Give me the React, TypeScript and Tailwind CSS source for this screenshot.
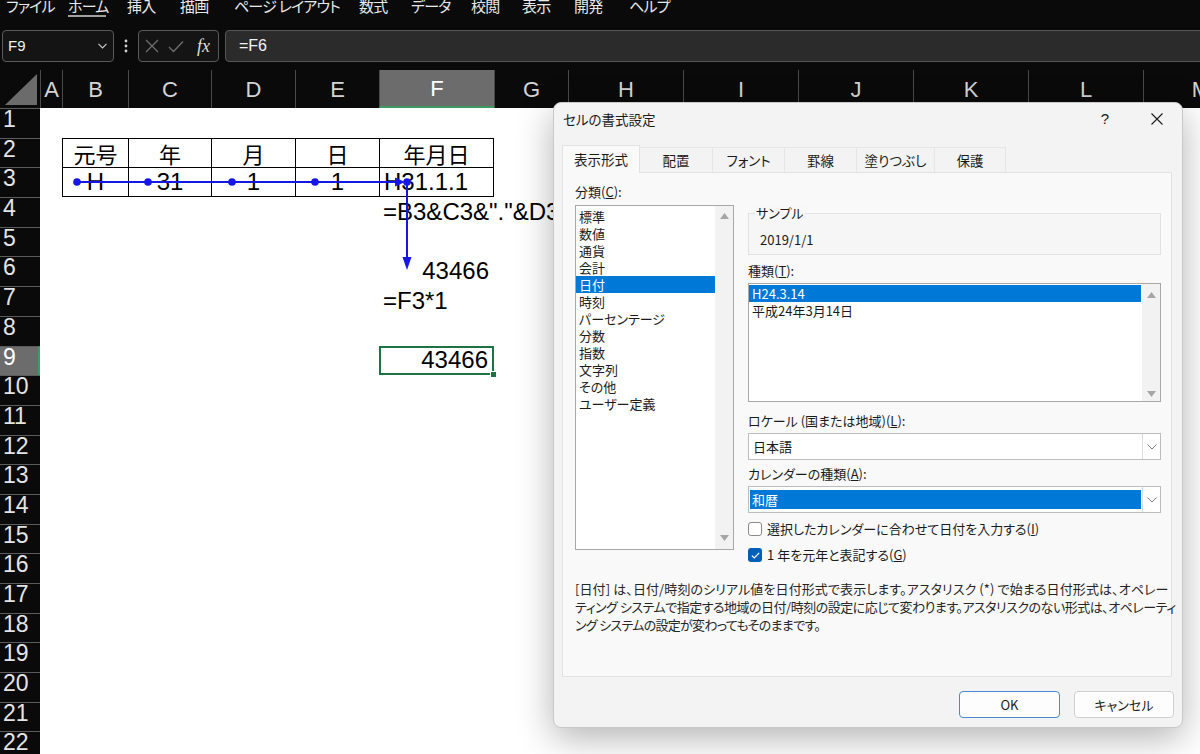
import React from "react";

const CJK = "font-['Noto_Sans_CJK_JP',sans-serif]";
const LAT = "font-['Liberation_Sans',sans-serif]";

const MENU: [string, string][] = [
  ["ファイル", "w-[62px]"],
  ["ホーム", "w-[59px]"],
  ["挿入", "w-[53px]"],
  ["描画", "w-[54px]"],
  ["ページ レイアウト", "w-[125px]"],
  ["数式", "w-[52px]"],
  ["データ", "w-[60px]"],
  ["校閲", "w-[51px]"],
  ["表示", "w-[52px]"],
  ["開発", "w-[55px]"],
  ["ヘルプ", "w-[60px]"],
];

const COLS: [string, string][] = [
  ["A", "w-[22px]"],
  ["B", "w-[66px]"],
  ["C", "w-[83px]"],
  ["D", "w-[84px]"],
  ["E", "w-[84px]"],
  ["F", "w-[115px]"],
  ["G", "w-[74px]"],
  ["H", "w-[115px]"],
  ["I", "w-[115px]"],
  ["J", "w-[115px]"],
  ["K", "w-[115px]"],
  ["L", "w-[115px]"],
  ["M", "w-[115px]"],
];

const ROWS = Array.from({ length: 22 }, (_, i) => i + 1);

const TEXT: Record<string, string> = {
  B2: "元号",
  C2: "年",
  D2: "月",
  E2: "日",
  F2: "年月日",
  B3: "H",
  C3: "31",
  D3: "1",
  E3: "1",
  F3: "H31.1.1",
  F4: '=B3&C3&"."&D3',
  F6: "43466",
  F7: "=F3*1",
  F9: "43466",
};

const CATS = [
  "標準",
  "数値",
  "通貨",
  "会計",
  "日付",
  "時刻",
  "パーセンテージ",
  "分数",
  "指数",
  "文字列",
  "その他",
  "ユーザー定義",
];

const TABS: [string, string][] = [
  ["表示形式", "w-[78px]"],
  ["配置", "w-[73px]"],
  ["フォント", "w-[72px]"],
  ["罫線", "w-[72px]"],
  ["塗りつぶし", "w-[78px]"],
  ["保護", "w-[71px]"],
];

function MenuBar() {
  return (
    <div className={`flex h-[30px] pl-[6px] text-[15px] leading-[15px] tracking-[-0.8px] text-[#e8e8e8] ${CJK} [font-feature-settings:'palt']`}>
      {MENU.map(([t, w]) => (
        <div key={t} className={`${w} shrink-0 flex flex-col items-start -mt-[2px]`}>
          <span className="whitespace-pre">{t}</span>
          {t === "ホーム" && <div className="mt-[2px] h-[2px] w-[38px] bg-[#a0a0a0]" />}
        </div>
      ))}
    </div>
  );
}

function FormulaBar() {
  return (
    <div className="flex h-[32px]">
      <div className="ml-[2px] w-[112px] shrink-0 rounded-[4px] border border-[#5a5a5a] bg-[#141414] flex items-center pl-[5px] pr-[6px] text-[15px] text-[#f0f0f0]">
        <span className={LAT}>F9</span>
        <svg className="ml-auto" width="9" height="6" viewBox="0 0 9 6">
          <path d="M0.5 0.8 L4.5 4.8 L8.5 0.8" stroke="#c8c8c8" strokeWidth="1.2" fill="none" />
        </svg>
      </div>
      <div className="w-[24px] shrink-0 flex items-center justify-center">
        <svg width="4" height="14" viewBox="0 0 4 14">
          <circle cx="2" cy="2" r="1.4" fill="#d0d0d0" />
          <circle cx="2" cy="7" r="1.4" fill="#d0d0d0" />
          <circle cx="2" cy="12" r="1.4" fill="#d0d0d0" />
        </svg>
      </div>
      <div className="w-[81px] shrink-0 rounded-[4px] border border-[#5a5a5a] bg-[#141414] flex items-center pl-[6px]">
        <svg width="14" height="14" viewBox="0 0 14 14">
          <path d="M1 1 L13 13 M13 1 L1 13" stroke="#6e6e6e" strokeWidth="1.3" />
        </svg>
        <svg className="ml-[9px]" width="16" height="13" viewBox="0 0 16 13">
          <path d="M1 7 L5.5 11.5 L15 1.5" stroke="#6e6e6e" strokeWidth="1.3" fill="none" />
        </svg>
        <span className="ml-[13px] text-[18px] leading-[18px] italic text-[#dedede] font-['Liberation_Serif',serif]">fx</span>
      </div>
      <div className={`ml-[6px] w-[990px] shrink-0 rounded-[4px] border border-[#555555] bg-[#2b2b2b] flex items-center pl-[13px] text-[16px] text-[#f2f2f2] ${LAT}`}>
        =F6
      </div>
    </div>
  );
}

function Cell({ col, w, r }: { col: string; w: string; r: number }) {
  const key = `${col}${r}`;
  const text = TEXT[key];
  const inTable = (r === 2 || r === 3) && "BCDEF".includes(col);
  const sel = key === "F9";
  let cls = `${w} shrink-0 relative flex items-center whitespace-nowrap text-black`;
  if (inTable) {
    cls += " border-l border-t border-black";
    if (col === "F") cls += " border-r";
    if (r === 3) cls += " border-b";
  }
  if (sel) cls += " border-2 border-[#1f7244]";
  if (text) {
    if (r === 2) cls += ` justify-center text-[22px] ${CJK}`;
    else cls += ` text-[24px] ${LAT}`;
    if (r === 3 && col !== "F") cls += " justify-center";
    if (key === "F3" || key === "F4" || key === "F7") cls += " pl-[4px]";
    if (key === "F6") cls += " justify-end pr-[5px]";
    if (key === "F9") cls += " justify-end pr-[4px]";
  }
  return (
    <div className={cls}>
      {text}
      {sel && <div className="absolute -right-[5px] -bottom-[5px] w-[7px] h-[7px] bg-[#1f7244] border border-white" />}
    </div>
  );
}

function Row({ r }: { r: number }) {
  return (
    <div className="flex h-[29.7px]">
      <div
        className={`w-[40px] shrink-0 border-t border-[#5c5c5c] pl-[3px] text-[23px] leading-[20px] ${LAT} ${
          r === 9 ? "bg-[#6c6c6c] text-white border-r-2 border-r-[#3d9a62]" : "bg-[#0a0a0a] text-[#e4e4e4]"
        }`}
      >
        {r}
      </div>
      {COLS.map(([c, w]) => (
        <Cell key={c} col={c} w={w} r={r} />
      ))}
    </div>
  );
}

function Sheet() {
  return (
    <div className="mt-[8px] bg-white">
      <div className="flex h-[38px] bg-[#0a0a0a]">
        <div className="w-[40px] shrink-0">
          <svg width="40" height="38" className="block">
            <polygon points="37,4 37,35 5,35" fill="#6b6b6b" />
          </svg>
        </div>
        {COLS.map(([name, w]) => (
          <div
            key={name}
            className={`${w} shrink-0 flex items-center justify-center border-l border-[#4a4a4a] text-[22px] ${LAT} ${
              name === "F" ? "bg-[#6c6c6c] text-white border-b-2 border-b-[#3d9a62]" : "text-[#d4d4d4]"
            }`}
          >
            {name}
          </div>
        ))}
      </div>
      {ROWS.map((r) => (
        <Row key={r} r={r} />
      ))}
    </div>
  );
}

function Tracer() {
  return (
    <svg className="absolute left-0 top-0 pointer-events-none" width="1200" height="754">
      <g fill="#1616e8">
        <line x1="77" y1="182" x2="397" y2="182" stroke="#1616e8" strokeWidth="2" />
        <polygon points="395,177.5 405,182 395,186.5" />
        <line x1="407" y1="182" x2="407" y2="259" stroke="#1616e8" strokeWidth="2" />
        <polygon points="402.5,257 407,270 411.5,257" />
        <circle cx="77" cy="182" r="3.8" />
        <circle cx="148" cy="182" r="3.8" />
        <circle cx="232" cy="182" r="3.8" />
        <circle cx="315" cy="182" r="3.8" />
        <circle cx="407" cy="182" r="3.8" />
      </g>
    </svg>
  );
}

function Up() {
  return (
    <svg width="9" height="6" viewBox="0 0 9 6">
      <polygon points="0,6 4.5,0 9,6" fill="#a6a6a6" />
    </svg>
  );
}
function Down() {
  return (
    <svg width="9" height="6" viewBox="0 0 9 6">
      <polygon points="0,0 4.5,6 9,0" fill="#a6a6a6" />
    </svg>
  );
}
function Chevron() {
  return (
    <svg width="10" height="6" viewBox="0 0 10 6">
      <path d="M0.5 0.5 L5 5 L9.5 0.5" stroke="#7c7c7c" strokeWidth="1" fill="none" />
    </svg>
  );
}

function Combo({ selected }: { selected?: boolean }) {
  return (
    <div className="mt-[4px] h-[27px] border border-[#bdbdbd] bg-white flex">
      <div className="flex-1 px-[1px] flex items-center">
        {selected ? (
          <div className="w-full h-[19px] bg-[#0078d7] text-white pl-[2px] leading-[19px]">和暦</div>
        ) : (
          <span className="pl-[3px]">日本語</span>
        )}
      </div>
      <div className="w-[18px] border-l border-[#dcdcdc] flex items-center justify-center">
        <Chevron />
      </div>
    </div>
  );
}

function Dialog() {
  return (
    <div
      className={`absolute left-[553px] top-[102px] w-[630px] h-[626px] rounded-[8px] border border-[#c9c9c9] bg-[#f3f3f3] shadow-[0_10px_36px_rgba(0,0,0,0.30)] flex flex-col text-[#1b1b1b] text-[13px] ${CJK} [font-feature-settings:'palt']`}
    >
      <div className="h-[32px] shrink-0 flex items-center pl-[9px] pr-[13px]">
        <span className="text-[13.5px]">セルの書式設定</span>
        <div className="ml-auto flex items-center gap-[28px]">
          <span className={`w-[24px] text-center text-[15px] ${LAT}`}>?</span>
          <div className="w-[24px] flex justify-center">
            <svg width="12" height="12" viewBox="0 0 12 12">
              <path d="M0.5 0.5 L11.5 11.5 M11.5 0.5 L0.5 11.5" stroke="#1b1b1b" strokeWidth="1.1" />
            </svg>
          </div>
        </div>
      </div>

      <div className="mt-[10px] ml-[8px] h-[27px] shrink-0 flex items-end relative z-10">
        {TABS.map(([t, w], i) =>
          i === 0 ? (
            <div
              key={t}
              className={`${w} h-[28px] -mb-[1px] flex items-center justify-center bg-[#f9f9f9] border border-b-0 border-[#e2e2e2] text-[13.5px]`}
            >
              {t}
            </div>
          ) : (
            <div
              key={t}
              className={`${w} h-[25px] flex items-center justify-center bg-[#f3f3f3] border-t border-r border-[#e6e6e6] text-[13.5px]`}
            >
              {t}
            </div>
          )
        )}
      </div>

      <div className="ml-[8px] w-[610px] h-[505px] shrink-0 border border-[#e2e2e2] bg-[#f9f9f9] flex flex-col">
        <div className="flex pl-[12px]">
          <div className="w-[159px] shrink-0 pt-[11px]">
            <div className="h-[16px] leading-[16px]">
              分類(<u>C</u>):
            </div>
            <div className="mt-[5px] h-[345px] border border-[#a8a8a8] bg-white flex">
              <div className="flex-1 pt-[2px]">
                {CATS.map((c) => (
                  <div
                    key={c}
                    className={`h-[17px] leading-[17px] pl-[3px] whitespace-nowrap ${c === "日付" ? "bg-[#0078d7] text-white" : ""}`}
                  >
                    {c}
                  </div>
                ))}
              </div>
              <div className="w-[18px] bg-[#f2f2f2] flex flex-col items-center justify-between pt-[7px] pb-[8px]">
                <Up />
                <Down />
              </div>
            </div>
          </div>

          <div className="ml-[14px] w-[413px] shrink-0 pt-[40px]">
            <div className="relative h-[42px] border border-[#e2e2e2] bg-[#f6f6f6] pl-[11px] pt-[18px]">
              <span className="absolute -top-[9px] left-[6px] px-[1px] bg-[#f8f8f8] leading-[16px]">サンプル</span>
              <div className="leading-[16px]">2019/1/1</div>
            </div>

            <div className="mt-[8px] h-[16px] leading-[16px]">
              種類(<u>T</u>):
            </div>
            <div className="mt-[4px] h-[119px] border border-[#a8a8a8] bg-white flex">
              <div className="flex-1 pt-[1px] pr-[1px]">
                <div className="h-[17px] leading-[17px] pl-[3px] bg-[#0078d7] text-white">H24.3.14</div>
                <div className="h-[17px] leading-[17px] pl-[3px]">平成24年3月14日</div>
              </div>
              <div className="w-[18px] bg-[#f2f2f2] flex flex-col items-center justify-between pt-[8px] pb-[4px]">
                <Up />
                <Down />
              </div>
            </div>

            <div className="mt-[11px] h-[16px] leading-[16px]">
              ロケール (国または地域)(<u>L</u>):
            </div>
            <Combo />

            <div className="mt-[6px] h-[16px] leading-[16px]">
              カレンダーの種類(<u>A</u>):
            </div>
            <Combo selected />

            <div className="mt-[8px] h-[16px] flex items-center">
              <div className="w-[14px] h-[14px] rounded-[3px] border border-[#8a8a8a] bg-white" />
              <span className="ml-[5px] leading-[16px]">
                選択したカレンダーに合わせて日付を入力する(<u>I</u>)
              </span>
            </div>
            <div className="mt-[10px] h-[16px] flex items-center">
              <div className="w-[14px] h-[14px] rounded-[3px] bg-[#005fb8] flex items-center justify-center">
                <svg width="9" height="7" viewBox="0 0 9 7">
                  <path d="M0.8 3.6 L3.3 6 L8.2 0.8" stroke="white" strokeWidth="1.2" fill="none" />
                </svg>
              </div>
              <span className="ml-[5px] leading-[16px]">
                1 年を元年と表記する(<u>G</u>)
              </span>
            </div>
          </div>
        </div>

        <div className="mt-[17px] pl-[12px] text-[13px] leading-[18px] text-[#262626] whitespace-nowrap">
          <div className="tracking-[0.1px]">
            [日付] は、日付/時刻のシリアル値を日付形式で表示します。アスタリスク (*) で始まる日付形式は、オペレー
          </div>
          <div className="tracking-[-0.5px]">
            ティング システムで指定する地域の日付/時刻の設定に応じて変わります。アスタリスクのない形式は、オペレーティ
          </div>
          <div className="tracking-[-0.7px]">ング システムの設定が変わってもそのままです。</div>
        </div>
      </div>

      <div className="mt-[14px] pr-[8px] flex justify-end gap-[14px]">
        <div className="w-[101px] h-[27px] rounded-[4px] border border-[#4a8ad0] bg-[#fdfdfd] flex items-center justify-center">
          OK
        </div>
        <div className="w-[100px] h-[27px] rounded-[4px] border border-[#d0d0d0] bg-[#fdfdfd] flex items-center justify-center">
          キャンセル
        </div>
      </div>
    </div>
  );
}

export default function App() {
  return (
    <div className="relative w-[1200px] h-[754px] overflow-hidden bg-[#0a0a0a]">
      <MenuBar />
      <FormulaBar />
      <Sheet />
      <Tracer />
      <Dialog />
    </div>
  );
}
